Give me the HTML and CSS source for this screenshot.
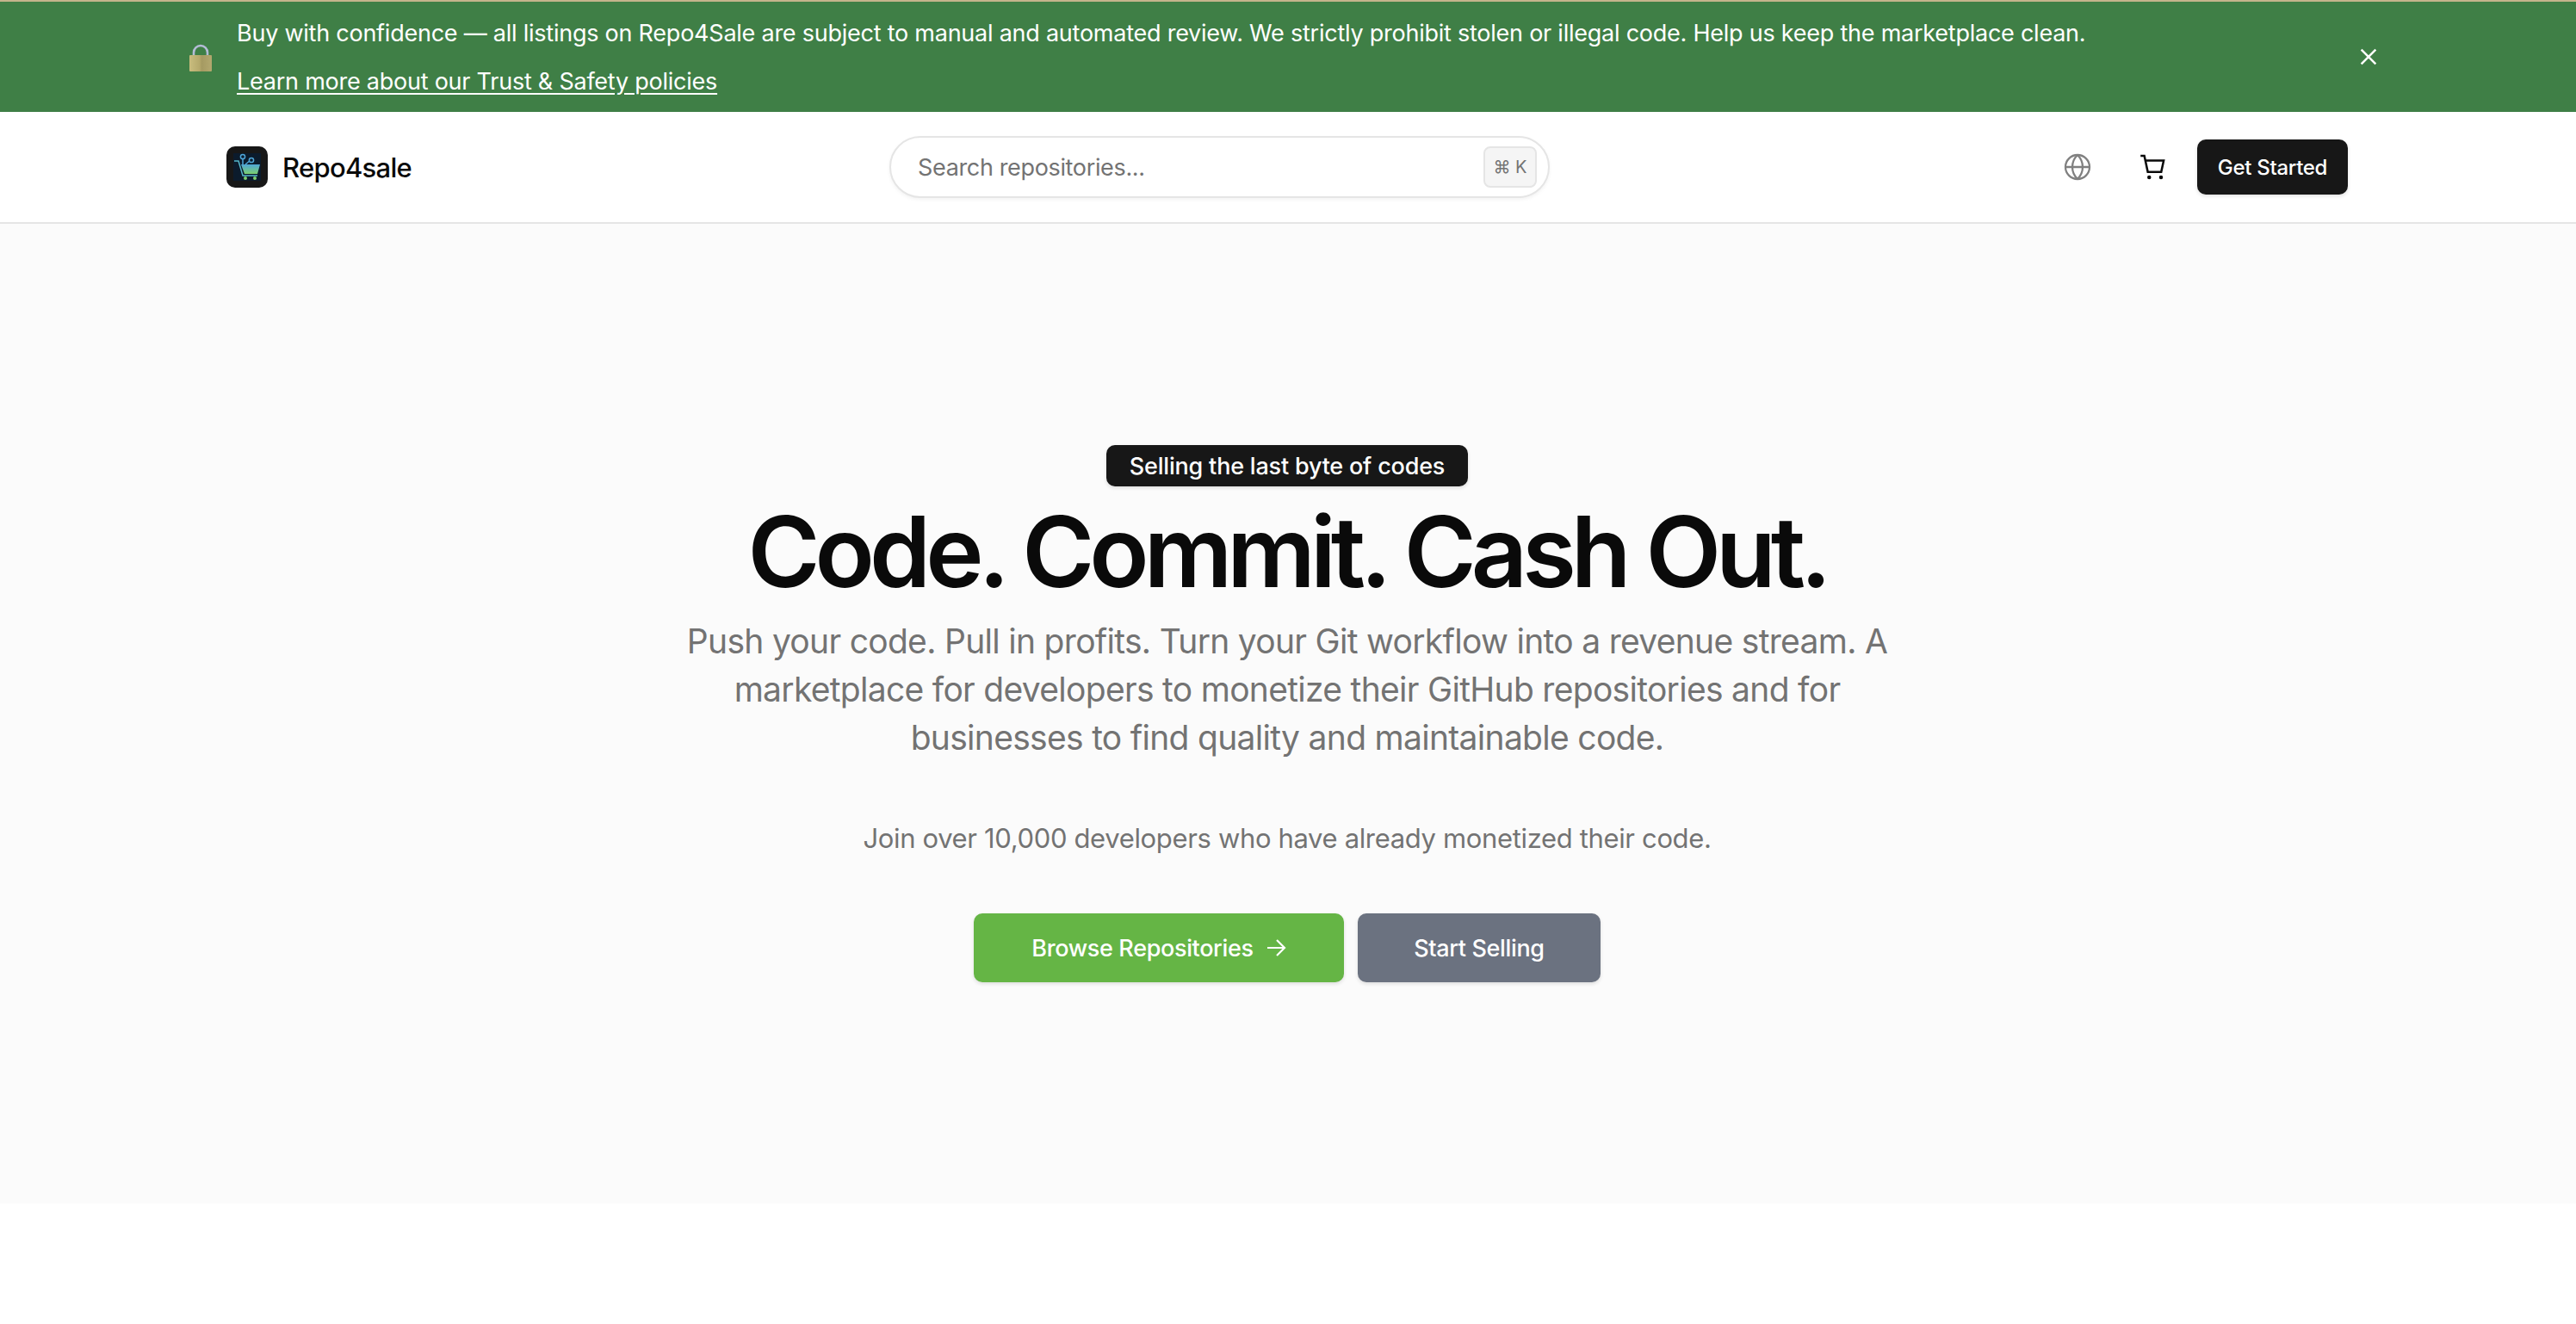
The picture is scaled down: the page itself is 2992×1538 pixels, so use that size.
FILE: index.html
```html
<!DOCTYPE html>
<html lang="en">
<head>
<meta charset="utf-8">
<title>Repo4sale</title>
<link rel="stylesheet" href="styles.css">
</head>
<body>
<div class="banner">
  <svg class="lock" viewBox="0 0 26 32" aria-hidden="true">
    <defs><linearGradient id="gold" x1="0" x2="1" y1="0" y2="0"><stop offset="0" stop-color="#c9bd7e"/><stop offset=".45" stop-color="#b5a96c"/><stop offset=".55" stop-color="#a59a62"/><stop offset="1" stop-color="#b3a86f"/></linearGradient></defs>
    <path d="M5 15V10a8 8 0 0 1 16 0v5" fill="none" stroke="#b4bcd6" stroke-width="2.6"/>
    <rect x="0" y="13" width="26" height="19" rx="1" fill="url(#gold)"/>
  </svg>
  <div class="banner-text">
    <p class="banner-line">Buy with confidence — all listings on Repo4Sale are subject to manual and automated review. We strictly prohibit stolen or illegal code. Help us keep the marketplace clean.</p>
    <a class="banner-link" href="#">Learn more about our Trust &amp; Safety policies</a>
  </div>
  <svg class="close" viewBox="0 0 24 24" aria-hidden="true"><path d="M2 2l20 20M22 2L2 22"/></svg>
</div>
<header class="nav">
  <a class="brand" href="#">
    <span class="logo">
      <svg viewBox="0 0 32 32" aria-hidden="true">
        <defs><linearGradient id="cart" x1="0" x2="0" y1="0" y2="1"><stop offset="0" stop-color="#4fa6d8"/><stop offset="1" stop-color="#7bd06f"/></linearGradient></defs>
        <rect width="32" height="32" fill="#0b1b2c"/>
        <path d="M9 13h22l-3 11H13z" fill="url(#cart)"/>
        <path d="M1 9h5l5 17h17" fill="none" stroke="#55b6c8" stroke-width="1.5"/>
        <path d="M11 4v9M14 13l6-5" stroke="#4fa6d8" stroke-width="1.5" fill="none"/>
        <circle cx="11" cy="4" r="2.6" fill="#0b1b2c" stroke="#4fa6d8" stroke-width="1.5"/>
        <circle cx="21" cy="8" r="2.6" fill="#0b1b2c" stroke="#4fa6d8" stroke-width="1.5"/>
        <circle cx="14" cy="29" r="2" fill="#7bd06f"/><circle cx="25" cy="29" r="2" fill="#7bd06f"/>
      </svg>
    </span>
    <span class="brand-name">Repo4sale</span>
  </a>
  <div class="search">
    <span class="search-text">Search repositories...</span>
    <kbd class="kbd">⌘ K</kbd>
  </div>
  <div class="actions">
    <svg class="globe" viewBox="0 0 24 24" aria-hidden="true"><circle cx="12" cy="12" r="10.5"/><path d="M1.5 12h21M12 1.5c-6 6-6 15 0 21M12 1.5c6 6 6 15 0 21"/></svg>
    <svg class="cart" viewBox="0 0 24 24" aria-hidden="true"><path d="M1 1.5h3.5l3.2 15h12.5l2.3-10.5H5.6"/><circle cx="9" cy="21.5" r="1.8" class="dot"/><circle cx="20" cy="21.5" r="1.8" class="dot"/></svg>
    <a class="get-started" href="#">Get Started</a>
  </div>
</header>
<main class="hero">
  <span class="badge">Selling the last byte of codes</span>
  <h1 class="title">Code. Commit. Cash Out.</h1>
  <p class="lead">Push your code. Pull in profits. Turn your Git workflow into a revenue stream. A marketplace for developers to monetize their GitHub repositories and for businesses to find quality and maintainable code.</p>
  <p class="join">Join over 10,000 developers who have already monetized their code.</p>
  <div class="cta">
    <a class="btn btn-green" href="#">Browse Repositories
      <svg class="arrow" viewBox="0 0 24 24" aria-hidden="true"><path d="M2 12h20M13 3l9 9-9 9"/></svg>
    </a>
    <a class="btn btn-gray" href="#">Start Selling</a>
  </div>
</main>
</body>
</html>
```
FILE: styles.css
```css
* { box-sizing: border-box; }
html, body { margin: 0; padding: 0; background: #fff; }
body { font-family: Inter, "Noto Sans", sans-serif; color: #0a0a0a; height: 1538px; overflow: hidden; }
a { color: inherit; text-decoration: none; }
p { margin: 0; }

.banner {
  height: 130px; background: #3f7f46; border-top: 2px solid #c4b48c; color: #fff;
  display: flex; align-items: center; padding: 0 231px 0 220px;
}
.lock { width: 26px; height: 32px; flex: none; margin: 2px 29px 0 0; }
.banner-text { flex: 1; font-size: 27px; letter-spacing: -.24px; padding-top: 2px; }
.banner-line { line-height: 38px; margin-bottom: 18px; }
.banner-link { display: inline-block; line-height: 38px; text-decoration: underline; text-underline-offset: 4px; }
.close { width: 20px; height: 20px; fill: none; stroke: #fff; stroke-width: 3; flex: none; }

.nav {
  height: 130px; background: #fff; border-bottom: 2px solid #e5e5e5;
  display: flex; align-items: center; padding: 0 265px 0 263px;
}
.brand { display: flex; align-items: center; gap: 17px; width: 770px; flex: none; }
.logo { width: 48px; height: 48px; background: #171717; border-radius: 10px; display: flex; align-items: center; justify-content: center; }
.logo svg { width: 32px; height: 32px; }
.brand-name { font-size: 31px; font-weight: 500; letter-spacing: -.7px; }
.search {
  width: 767px; height: 72px; border: 2px solid #e5e5e5; border-radius: 36px; background: #fff;
  box-shadow: 0 2px 4px rgba(0,0,0,.05); display: flex; align-items: center; justify-content: space-between; padding: 0 13px 0 31px;
}
.search-text { font-size: 27px; color: #737373; letter-spacing: -.35px; }
.kbd {
  width: 62px; height: 48px; border: 2px solid #e5e5e5; border-radius: 8px; background: #f5f5f5;
  display: flex; align-items: center; justify-content: center; font: 20px Inter, "DejaVu Sans", sans-serif; color: #737373;
}
.actions { display: flex; align-items: center; margin-left: auto; }
.globe { width: 32px; height: 32px; fill: none; stroke: #808080; stroke-width: 1.7; margin-right: 56px; }
.cart { width: 30px; height: 30px; fill: none; stroke: #0a0a0a; stroke-width: 2; margin-right: 37px; }
.cart .dot { fill: #0a0a0a; stroke: none; }
.get-started {
  width: 175px; height: 64px; background: #171717; color: #fff; border-radius: 10px; font-size: 24px; font-weight: 500; letter-spacing: -.3px;
  display: flex; align-items: center; justify-content: center; box-shadow: 0 2px 4px rgba(0,0,0,.12);
}

.hero {
  height: 1138px; background: #fbfbfb; display: flex; flex-direction: column; align-items: center; padding: 257px 2px 0 0;
}
.badge {
  height: 48px; width: 420px; background: #171717; color: #fff; border-radius: 10px; font-size: 27px; font-weight: 500; letter-spacing: -.2px;
  display: flex; align-items: center; justify-content: center; box-shadow: 0 2px 4px rgba(0,0,0,.12);
}
.title { margin: 16px 0 0; font-size: 114px; line-height: 120px; font-weight: 600; letter-spacing: -6px; color: #0a0a0a; white-space: nowrap; }
.lead { margin-top: 16px; width: 1420px; font-size: 39px; line-height: 56px; color: #737373; text-align: center; letter-spacing: -.7px; }
.join { margin-top: 67px; font-size: 31px; line-height: 44px; color: #737373; letter-spacing: -.35px; }
.cta { display: flex; gap: 16px; margin-top: 65px; }
.btn {
  height: 80px; border-radius: 10px; color: #fff; font-size: 27px; font-weight: 500; letter-spacing: -.35px;
  display: flex; align-items: center; justify-content: center; box-shadow: 0 2px 4px rgba(0,0,0,.12);
}
.btn-green { width: 430px; background: #65b545; gap: 14px; }
.btn-gray { width: 282px; background: #6b7280; }
.arrow { width: 24px; height: 24px; fill: none; stroke: #fff; stroke-width: 2.2; }
```
